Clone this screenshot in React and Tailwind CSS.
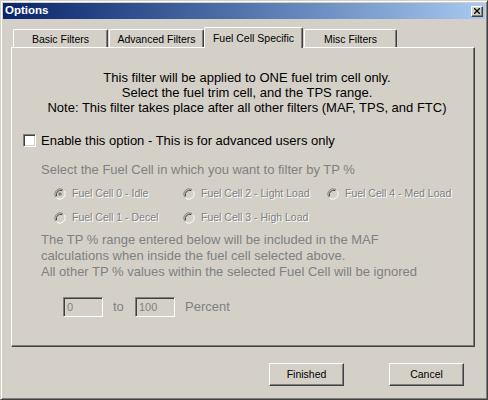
import React from 'react'

const raised = 'border border-t-white border-l-white border-r-[#404040] border-b-[#404040] shadow-[inset_-1px_-1px_0_#808080]'
const sunken = 'border border-t-[#808080] border-l-[#808080] border-r-white border-b-white shadow-[inset_1px_1px_0_#404040,inset_-1px_-1px_0_#d4d0c8]'

function Radio({ checked, label }) {
  return (
    <div className="flex items-center h-[13px]">
      <svg width="12" height="12" viewBox="0 0 12 12" className="shrink-0">
        <circle cx="6" cy="6" r="5.5" fill="#d4d0c8" />
        <path d="M1.5 9 A5.5 5.5 0 0 1 9 1.5" fill="none" stroke="#808080" strokeWidth="1" />
        <path d="M2.6 8.2 A4.3 4.3 0 0 1 8.2 2.6" fill="none" stroke="#404040" strokeWidth="1" />
        <path d="M10.5 3 A5.5 5.5 0 0 1 3 10.5" fill="none" stroke="#ffffff" strokeWidth="1" />
        {checked && <circle cx="6" cy="6" r="1.8" fill="#808080" />}
      </svg>
      <span className="ml-[6px] text-[10.5px] text-[#808080] [text-shadow:1px_1px_0_#fff] whitespace-nowrap">
        {label}
      </span>
    </div>
  )
}

function Tab({ label, width, selected }) {
  if (selected) {
    return (
      <div
        className={`relative z-10 -mb-px h-[21px] ${width} bg-[#d4d0c8] border-t border-l border-r border-t-white border-l-white border-r-[#404040] rounded-t-[2px] shadow-[inset_-1px_0_0_#808080] flex items-start justify-center pt-[3px] text-[10.5px]`}
      >
        {label}
      </div>
    )
  }
  return (
    <div
      className={`h-[18px] ${width} border-t border-l border-r border-t-white border-l-white border-r-[#404040] rounded-t-[2px] shadow-[inset_-1px_0_0_#808080] flex items-center justify-center pt-[2px] text-[10.5px]`}
    >
      {label}
    </div>
  )
}

function Button({ children }) {
  return (
    <button className={`w-[75px] h-[23px] bg-[#d4d0c8] ${raised} text-[10.5px] text-black`}>
      {children}
    </button>
  )
}

export default function App() {
  return (
    <div className="w-[488px] h-[400px] bg-[#d4d0c8] font-['Liberation_Sans',Arial,sans-serif] text-black">
      <div className="w-full h-full border border-t-[#d4d0c8] border-l-[#d4d0c8] border-r-[#404040] border-b-[#404040] shadow-[inset_1px_1px_0_#fff,inset_-1px_-1px_0_#808080] p-[2px]">
        {/* title bar */}
        <div className="h-[16px] bg-gradient-to-r from-[#0a246a] to-[#a6caf0] flex items-center justify-between pl-[2px] pr-[2px]">
          <span className="text-white font-bold text-[11.5px] leading-none">Options</span>
          <div className={`w-[12px] h-[11px] bg-[#d4d0c8] ${raised} flex items-center justify-center`}>
            <svg width="6" height="6" viewBox="0 0 6 6">
              <path d="M0 0 L6 6 M6 0 L0 6" stroke="#000" strokeWidth="1.3" />
            </svg>
          </div>
        </div>

        {/* tabs */}
        <div className="ml-[8px] mt-[8px] h-[20px] flex items-end pl-[2px]">
          <Tab label="Basic Filters" width="w-[95px]" />
          <div className="w-px" />
          <Tab label="Advanced Filters" width="w-[95px]" />
          <Tab label="Fuel Cell Specific" width="w-[99px]" selected />
          <div className="w-px" />
          <Tab label="Misc Filters" width="w-[93px]" />
        </div>

        {/* panel */}
        <div className={`ml-[8px] w-[464px] h-[300px] ${raised}`}>
          <div className="mt-[22px] pl-[8px] text-center text-[13px] leading-[15px]">
            <p>This filter will be applied to ONE fuel trim cell only.</p>
            <p>Select the fuel trim cell, and the TPS range.</p>
            <p>Note: This filter takes place after all other filters (MAF, TPS, and FTC)</p>
          </div>

          <div className="mt-[19px] ml-[11px] h-[13px] flex items-center">
            <div className={`w-[13px] h-[13px] bg-white ${sunken}`} />
            <span className="ml-[5px] text-[13px]">Enable this option - This is for advanced users only</span>
          </div>

          <p className="mt-[15px] ml-[29px] text-[13px] leading-[15px] text-[#808080]">
            Select the Fuel Cell in which you want to filter by TP %
          </p>

          <div className="mt-[10px] ml-[42px] flex">
            <div className="w-[129px] flex flex-col gap-[11px]">
              <Radio checked label="Fuel Cell 0 - Idle" />
              <Radio label="Fuel Cell 1 - Decel" />
            </div>
            <div className="w-[144px] flex flex-col gap-[11px]">
              <Radio label="Fuel Cell 2 - Light Load" />
              <Radio label="Fuel Cell 3 - High Load" />
            </div>
            <div className="flex flex-col gap-[11px]">
              <Radio label="Fuel Cell 4 - Med Load" />
            </div>
          </div>

          <div className="mt-[8px] ml-[29px] text-[13px] leading-[16px] text-[#808080]">
            <p>The TP % range entered below will be included in the MAF</p>
            <p>calculations when inside the fuel cell selected above.</p>
            <p>All other TP % values within the selected Fuel Cell will be ignored</p>
          </div>

          <div className="mt-[17px] ml-[51px] flex items-center text-[13px] text-[#808080]">
            <div className={`w-[40px] h-[20px] ${sunken} flex items-center pl-[3px] text-[11px]`}>0</div>
            <span className="ml-[10px] w-[12px]">to</span>
            <div className={`ml-[10px] w-[40px] h-[20px] ${sunken} flex items-center pl-[3px] text-[11px]`}>100</div>
            <span className="ml-[10px]">Percent</span>
          </div>
        </div>

        {/* buttons */}
        <div className="mt-[16px] mr-[21px] flex justify-end gap-[45px]">
          <Button>Finished</Button>
          <Button>Cancel</Button>
        </div>
      </div>
    </div>
  )
}
